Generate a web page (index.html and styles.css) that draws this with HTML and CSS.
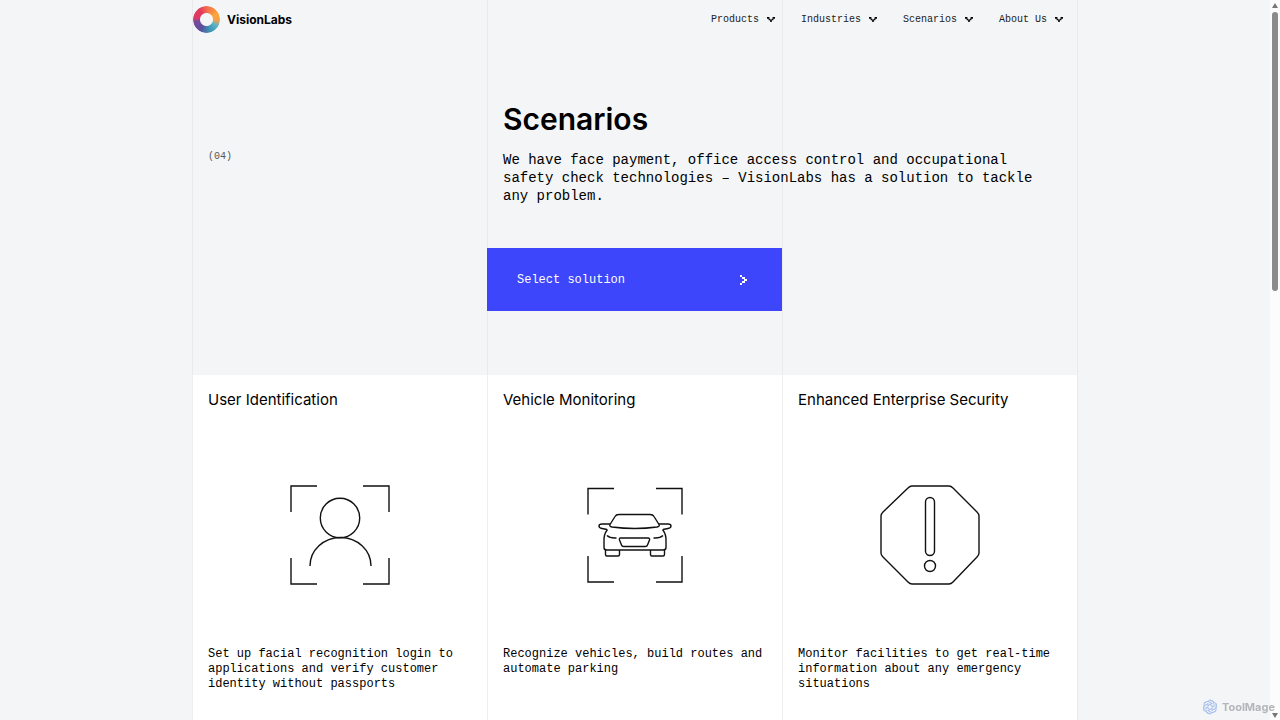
FILE: index.html
```
<!DOCTYPE html>
<html lang="en">
<head>
<meta charset="UTF-8" />
<meta name="viewport" content="width=device-width, initial-scale=1" />
<title>Scenarios - VisionLabs</title>
<link rel="stylesheet" href="styles.css">
</head>
<body>
<!-- Shared symbols -->
<svg class="symbols" aria-hidden="true">
  <symbol id="caret" viewBox="0 0 10 6">
    <path d="M0 0h3v2H0zM7 0h3v2H7zM2 2h2v2H2zM6 2h2v2H6zM4 3h2v3H4z" />
  </symbol>
  <symbol id="petal" viewBox="0 0 16 16">
    <path d="M8 1a4 4 0 0 1 4 4v3L8 5.500" />
  </symbol>
</svg>

<div class="page">
  <div class="container">
    <header class="header">
      <a class="logo" href="#">
        <span class="logo-mark"></span>
        VisionLabs
      </a>
      <nav class="nav" aria-label="Main">
        <button type="button">Products <svg class="caret"><use href="#caret" /></svg></button>
        <button type="button">Industries <svg class="caret"><use href="#caret" /></svg></button>
        <button type="button">Scenarios <svg class="caret"><use href="#caret" /></svg></button>
        <button type="button">About Us <svg class="caret"><use href="#caret" /></svg></button>
      </nav>
    </header>

    <section class="hero">
      <div class="hero-number">(04)</div>
      <div class="hero-text">
        <h1>Scenarios</h1>
        <p>We have face payment, office access control and occupational safety check technologies – VisionLabs has a solution to tackle any problem.</p>
      </div>
      <button type="button" class="hero-button">
        Select solution
        <svg class="arrow" viewBox="0 0 7 10"><path d="M0 0h2v2H0zM2 2h3v2H2zM4 4h3v2H4zM2 6h3v2H2zM0 8h2v2H0z" /></svg>
      </button>
    </section>

    <main class="cards">
      <article class="card">
        <h2>User Identification</h2>
        <svg class="card-icon" viewBox="0 0 100 100">
          <path d="M1 27V1h26M73 1h26v26M99 73v26H73M27 99H1V73" />
          <circle cx="50" cy="33" r="19.700" />
          <path d="M20 81a30.500 28.500 0 0 1 61 0" />
        </svg>
        <p>Set up facial recognition login to applications and verify customer identity without passports</p>
      </article>

      <article class="card">
        <h2>Vehicle Monitoring</h2>
        <svg class="card-icon" viewBox="0 0 100 100">
          <path d="M3 29.500V3.500h26M71 3.500h26v26M97 71v26H71M29 97H3V71" />
          <path d="M25 39.500l5-8q1-2 4-2h31q3 0 4 2l5 8q1 2-2 2.500-22 3-45 0-3-.5-2-2.500z" />
          <path d="M25 39h-8q-3 0-3 2t3 2.500l5 1M74 39h9q3 0 3 2t-3 2.500l-5 1" />
          <path d="M22.500 44.500q-4 5-3.500 12v6q0 2.500 3 2.500h56q3 0 3-2.500v-6q.5-7-3.500-12" />
          <path d="M20.500 65v4.500q0 1.500 1.500 1.500h11q1.500 0 1.500-1.500V65M65.500 65v4.500q0 1.500 1.500 1.500h11q1.500 0 1.500-1.500V65" />
          <path d="M36 53h27q2 0 1.500 2l-2 5q-.5 1.500-2 1.500h-22q-1.500 0-2-1.500l-2-5q-.5-2 1-2z" />
          <path d="M22 50.500q3 3 9.500 2.500M78 50.500q-3 3-9.500 2.500" />
        </svg>
        <p>Recognize vehicles, build routes and automate parking</p>
      </article>

      <article class="card">
        <h2>Enhanced Enterprise Security</h2>
        <svg class="card-icon" viewBox="0 0 100 100">
          <path d="M32 1h37q2 0 4 2l24 24q2 2 2 4v37q0 2-2 4L73 97q-2 2-4 2H32q-2 0-4-2L3 72q-2-2-2-4V31q0-2 2-4L28 3q2-2 4-2z" />
          <rect x="45.500" y="12.500" width="9" height="58" rx="4.500" />
          <circle cx="50" cy="81" r="5.500" />
        </svg>
        <p>Monitor facilities to get real-time information about any emergency situations</p>
      </article>
    </main>
  </div>
</div>

<div class="scrollbar" aria-hidden="true">
  <svg class="scroll-arrow" viewBox="0 0 6 5"><path d="M3 0l3 5H0z" /></svg>
  <div class="scroll-track"><div class="scroll-thumb"></div></div>
  <svg class="scroll-arrow" viewBox="0 0 6 5"><path d="M0 0h6L3 5z" /></svg>
</div>

<div class="watermark">
  <svg viewBox="0 0 16 16">
    <path d="M8 1l6 3.500v7L8 15l-6-3.500v-7z" />
    <use href="#petal" />
    <use href="#petal" transform="rotate(60 8 8)" />
    <use href="#petal" transform="rotate(120 8 8)" />
    <use href="#petal" transform="rotate(180 8 8)" />
    <use href="#petal" transform="rotate(240 8 8)" />
    <use href="#petal" transform="rotate(300 8 8)" />
  </svg>
  ToolMage
</div>
</body>
</html>
```
FILE: styles.css
```
/* --- RESET & BASIC STYLE --- */
*, *::before, *::after {
  box-sizing: border-box;
}
body {
  margin: 0;
  display: flex;
  height: 100vh;
  overflow: hidden;
  background: #f3f5f7;
  color: #000;
  font-family: Inter, "Liberation Sans", sans-serif;
}
h1, h2, p {
  margin: 0;
}
button {
  padding: 0;
  border: none;
  background: none;
  color: inherit;
  cursor: pointer;
}
.symbols {
  position: absolute;
  width: 0;
  height: 0;
}
/* --- PAGE --- */
.page {
  flex: 1;
  overflow: hidden;
}
.container {
  display: flex;
  flex-direction: column;
  max-width: 886px;
  min-height: 100%;
  margin: 0 auto;
  border-right: 1px solid #e8eaec;
  background: repeating-linear-gradient(to right, #e8eaec 0 1px, transparent 1px calc(100% / 3));
}
/* --- HEADER --- */
.header {
  display: flex;
  align-items: center;
  justify-content: space-between;
  height: 38px;
  padding: 0 14px 0 1px;
}
.logo {
  display: flex;
  align-items: center;
  gap: 7px;
  color: #000;
  font-size: 12px;
  font-weight: 700;
  text-decoration: none;
}
.logo-mark {
  width: 27px;
  height: 27px;
  border-radius: 50%;
  background: conic-gradient(#f4694c, #fba53a 60deg, #f5a04a 95deg, #5cb5c4 120deg, #3a93b5 165deg, #5a4f9c 210deg, #7a4a9c 260deg, #d93a68 275deg, #e23a5c 325deg, #f4694c);
  -webkit-mask: radial-gradient(circle, transparent 6px, #000 7px);
  mask: radial-gradient(circle, transparent 6px, #000 7px);
}
.nav {
  display: flex;
  gap: 26px;
}
.nav button {
  display: flex;
  align-items: center;
  gap: 8px;
  color: #222;
  font-family: "Liberation Mono", monospace;
  font-size: 10px;
}
.caret {
  width: 8px;
  height: 5px;
}
/* --- HERO --- */
.hero {
  display: grid;
  grid-template-columns: repeat(3, 1fr);
  padding: 61px 0 64px;
}
.hero-number {
  padding: 52px 16px 0;
  color: #555;
  font-family: "Liberation Mono", monospace;
  font-size: 10px;
}
.hero-text {
  grid-column: span 2;
  padding: 0 32px 0 16px;
}
.hero-text h1 {
  font-size: 30px;
  font-weight: 600;
  line-height: 40px;
}
.hero-text p {
  margin-top: 12px;
  font-family: "Liberation Mono", monospace;
  font-size: 14px;
  line-height: 18px;
}
.hero-button {
  grid-column: 2;
  display: flex;
  align-items: center;
  justify-content: space-between;
  height: 63px;
  margin-top: 43px;
  padding: 0 35px 0 30px;
  background: #3d46fb;
  color: #fff;
  font-family: "Liberation Mono", monospace;
  font-size: 12px;
}
.arrow {
  width: 7px;
  height: 10px;
  fill: #fff;
}
/* --- CARDS --- */
.cards {
  flex: 1;
  display: grid;
  grid-template-columns: repeat(3, 1fr);
}
.card {
  display: flex;
  flex-direction: column;
  padding: 15px;
  border-left: 1px solid #eceeef;
  background: #fff;
}
.card h2 {
  font-size: 15px;
  font-weight: 400;
  line-height: 20px;
}
.card-icon {
  align-self: center;
  width: 100px;
  height: 100px;
  margin: 75px 0 62px;
  fill: none;
  stroke: #111;
  stroke-width: 1.400;
}
.card p {
  font-family: "Liberation Mono", monospace;
  font-size: 12px;
  line-height: 15px;
}
/* --- SCROLLBAR --- */
.scrollbar {
  display: flex;
  flex-direction: column;
  align-items: center;
  width: 10px;
  padding: 3px 0 2px;
  background: #fcfcfc;
}
.scroll-arrow {
  width: 6px;
  height: 5px;
  fill: #777;
}
.scroll-track {
  flex: 1;
  padding: 4px 0;
}
.scroll-thumb {
  width: 6px;
  height: 40%;
  border-radius: 3px;
  background: #8b8b8b;
}
/* --- WATERMARK --- */
.watermark {
  position: fixed;
  right: 5px;
  bottom: 5px;
  display: flex;
  align-items: center;
  gap: 4px;
  color: #b4b5b8;
  font-size: 11px;
  font-weight: 700;
}
.watermark svg {
  width: 16px;
  height: 16px;
  fill: none;
  stroke: #a9c0ee;
}
```
